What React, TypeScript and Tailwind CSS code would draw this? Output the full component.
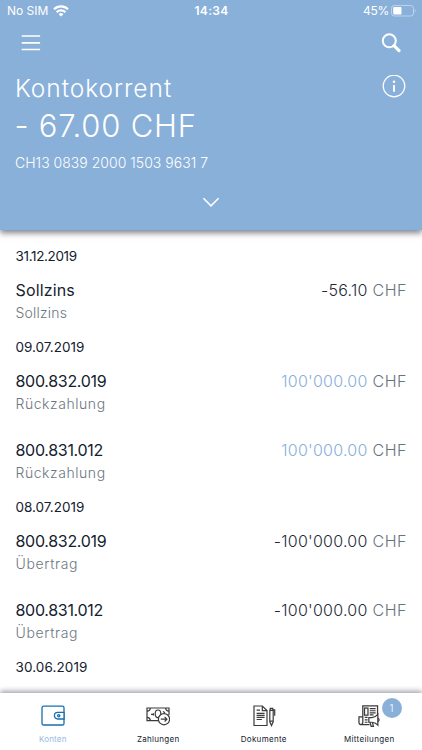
import React from "react";

type Entry = { title: string; note: string; amount: string; credit?: boolean; titleTracking: string; noteTracking: string };
type Day = { date: string; tracking: string; entries: Entry[] };

const days: Day[] = [
  {
    date: "31.12.2019",
    tracking: "tracking-[-0.35px]",
    entries: [
      { title: "Sollzins", note: "Sollzins", amount: "-56.10", titleTracking: "tracking-[0.15px]", noteTracking: "tracking-[0.2px]" },
    ],
  },
  {
    date: "09.07.2019",
    tracking: "tracking-[0px]",
    entries: [
      { title: "800.832.019", note: "Rückzahlung", amount: "100'000.00", credit: true, titleTracking: "tracking-[-0.3px]", noteTracking: "tracking-[0.55px]" },
      { title: "800.831.012", note: "Rückzahlung", amount: "100'000.00", credit: true, titleTracking: "tracking-[-0.3px]", noteTracking: "tracking-[0.55px]" },
    ],
  },
  {
    date: "08.07.2019",
    tracking: "tracking-[0px]",
    entries: [
      { title: "800.832.019", note: "Übertrag", amount: "-100'000.00", titleTracking: "tracking-[-0.3px]", noteTracking: "tracking-[0.65px]" },
      { title: "800.831.012", note: "Übertrag", amount: "-100'000.00", titleTracking: "tracking-[-0.3px]", noteTracking: "tracking-[0.65px]" },
    ],
  },
  { date: "30.06.2019", tracking: "tracking-[0.1px]", entries: [] },
];

function StatusBar() {
  return (
    <div className="grid h-[22px] grid-cols-3 items-center pl-[7px] pr-[6px] text-[12px] leading-[22px]">
      <div className="flex items-center gap-[5px]">
        <span className="tracking-[0px]">No SIM</span>
        <svg width="16" height="12" viewBox="0 0 16 12" fill="none" stroke="currentColor" strokeWidth="2.2">
          <path d="M1 4.3a10 10 0 0 1 14 0" />
          <path d="M3.6 7.2a6.3 6.3 0 0 1 8.8 0" />
          <path d="M8 11.6 5.6 9.2a3.5 3.5 0 0 1 4.8 0z" fill="currentColor" stroke="none" />
        </svg>
      </div>
      <div className="text-center font-semibold tracking-[0.3px]">14:34</div>
      <div className="flex items-center justify-end gap-[2px]">
        <span className="tracking-[-0.25px]">45%</span>
        <svg width="25" height="12" viewBox="0 0 25 12" fill="none">
          <rect x="0.5" y="0.5" width="22" height="10.5" rx="2.8" stroke="white" strokeOpacity=".45" />
          <rect x="2.2" y="2" width="8.3" height="7.5" rx="1" fill="white" />
          <path d="M23.6 4v3.6c1.2-.6 1.2-3 0-3.6z" fill="white" fillOpacity=".5" />
        </svg>
      </div>
    </div>
  );
}

function Header() {
  return (
    <header className="z-10 h-[230px] shrink-0 bg-[#89b0d9] text-white shadow-[0_3px_6px_rgba(20,25,50,0.55)]">
      <StatusBar />
      <div className="flex h-[42px] items-center justify-between pl-[21px] pr-[20px]">
        <svg width="20" height="18" viewBox="0 0 20 18" stroke="white" strokeWidth="1.7">
          <path d="M.7 2h18.4M.7 8.8h18.4M.7 15.5h18.4" />
        </svg>
        <svg width="21" height="21" viewBox="0 0 21 21" fill="none" stroke="white">
          <circle cx="8.3" cy="7.8" r="6.5" strokeWidth="2" />
          <path d="m13 12.6 5 5" strokeWidth="3.2" strokeLinecap="round" />
        </svg>
      </div>
      <div className="flex h-[46px] items-center justify-between pl-[15px] pr-[16px]">
        <h1 className="pt-[2px] text-[24.5px] font-light leading-[36px] tracking-[0.95px]">Kontokorrent</h1>
        <svg width="24" height="24" viewBox="0 0 24 24" fill="none" stroke="white">
          <circle cx="12" cy="11" r="10.8" strokeWidth="1.2" />
          <circle cx="12" cy="6.8" r="1.3" fill="white" stroke="none" />
          <path d="M12 10v6.7" strokeWidth="2" />
        </svg>
      </div>
      <div className="-mt-px pl-[14.5px] text-[31px] font-light leading-[34px] tracking-[0.8px]">- 67.00 CHF</div>
      <div className="mt-[9px] pl-[15px] text-[14px] font-[350] leading-[22px] tracking-[0.02px]">CH13 0839 2000 1503 9631 7</div>
      <div className="flex justify-center pt-[23px]">
        <svg width="18" height="11" viewBox="0 0 18 11" fill="none" stroke="white" strokeWidth="1.5">
          <path d="m1.4 1.2 7.6 7.7 7.6-7.7" />
        </svg>
      </div>
    </header>
  );
}

function Transaction({ entry }: { entry: Entry }) {
  return (
    <div className="h-[69px] pt-[11px]">
      <div className="flex items-center justify-between text-[16px] leading-[24px]">
        <span className={`font-[380] text-[#14212e] ${entry.titleTracking}`}>{entry.title}</span>
        <span className="-mr-[0.5px] font-light text-[#67737d]">
          <span className={`tracking-[0.25px] ${entry.credit ? "text-[#89b0d9]" : "text-[#1f2c38]"}`}>{entry.amount}</span>
          <span className="tracking-[0.5px]"> CHF</span>
        </span>
      </div>
      <div className={`text-[14px] font-light leading-[22px] text-[#6d7780] ${entry.noteTracking}`}>{entry.note}</div>
    </div>
  );
}

const WalletIcon = () => (
  <svg width="24" height="22" viewBox="0 0 24 22" fill="none" stroke="#1a6fae" strokeWidth="1.3">
    <rect x="1" y="1.2" width="22" height="18.8" rx="1.6" />
    <path d="M23 7.4h-6.3a3.3 3.3 0 0 0 0 6.6H23z" fill="white" />
    <circle cx="17.7" cy="10.7" r="1.1" />
  </svg>
);

const MoneyIcon = () => (
  <svg width="24" height="22" viewBox="0 0 24 22" fill="none" stroke="#3c3a3a" strokeWidth="1.2">
    <path d="M12.5 15.6H1V3h22v7" />
    <path d="M1 6.2A3.5 3.5 0 0 0 4.4 3M1 12.4a3.5 3.5 0 0 1 3.4 3.2M19.6 3A3.5 3.5 0 0 0 23 6.2" />
    <ellipse cx="12" cy="8.8" rx="2.8" ry="3.8" />
    <path d="M7.4 8.2v2.2M5 9.3h2M17 6.5l2 1.2" />
    <circle cx="18" cy="14.2" r="5.6" fill="white" />
    <path d="M14.8 14.2h6M18.6 11.9l2.3 2.3-2.3 2.3" />
  </svg>
);

const DocumentIcon = () => (
  <svg width="24" height="22" viewBox="0 0 24 22" fill="none" stroke="#3c3a3a" strokeWidth="1.2">
    <path d="M10.3 1H2v19.5h13V5.6z" />
    <path d="M10.3 1v4.6H15M4.6 5.2H8M4.6 8.3h8M4.6 10.3h8M4.6 12.3h8M4.6 14.5h5.3" />
    <path d="M17.8 5.3h3.4v11.5l-1.7 3.8-1.7-3.8zM18.2 5V3.4h2.6V5M21.2 4.8h1.5v6M17.8 16.2h3.4" />
  </svg>
);

const NewsIcon = () => (
  <svg width="23" height="23" viewBox="0 0 24 24" fill="none" stroke="#3c3a3a" strokeWidth="1.3">
    <path d="M12 20.5H3.2a2.2 2.2 0 0 1-2.2-2.3v-5.7h4V1h15.4v9M5 12.5v5.7c0 2-2.4 2.8-3.2 1.6" />
    <rect x="6.8" y="3.2" width="3.6" height="7.4" />
    <path d="M12.2 3.7h6.2M12.2 6h6.2M12.2 8.3h6.2M12.2 10.4h4M7 13h3M7 15.5h3M7 18h3" />
    <path d="M12.4 17.6l1.3 4.6h2.4l-1.2-4.6" fill="white" />
    <path d="M11.3 13.2h3.2c2.6 0 4.5-1.5 6.2-3.4v11.2c-1.7-1.8-3.6-3-6.2-3h-3.2z" fill="white" />
    <path d="M20.8 13.8a1.8 1.8 0 0 1 0 3.4" />
  </svg>
);

function NavItem({ label, icon, active, badge, tracking }: { label: string; icon: React.ReactNode; active?: boolean; badge?: string; tracking: string }) {
  return (
    <div className="relative flex flex-col items-center pt-[12px]">
      <div className="flex h-[22px] items-start">{icon}</div>
      <span className={`mt-[7px] text-[8px] leading-[10px] ${tracking} ${active ? "text-[#96b9de]" : "text-[#14212e]"}`}>{label}</span>
      {badge && (
        <span className="absolute left-[65px] top-[5px] flex size-[20px] items-center justify-center rounded-full bg-[#89b0d9] text-[10px] font-light text-white">
          {badge}
        </span>
      )}
    </div>
  );
}

export default function App() {
  return (
    <div className="flex h-[750px] w-[422px] flex-col overflow-hidden bg-white font-['Inter','Liberation_Sans',sans-serif]">
      <Header />
      <main className="min-h-0 flex-1 overflow-hidden px-[15.5px] pt-[15px]">
        {days.map((day) => (
          <section key={day.date}>
            <h2 className={`text-[13.5px] font-[380] leading-[22px] text-[#14212e] ${day.tracking}`}>{day.date}</h2>
            {day.entries.map((entry) => (
              <Transaction key={entry.title} entry={entry} />
            ))}
          </section>
        ))}
      </main>
      <nav className="z-10 grid h-[57px] shrink-0 grid-cols-4 bg-white shadow-[0_-2px_5px_rgba(20,25,50,0.4)]">
        <NavItem label="Konten" icon={<WalletIcon />} active tracking="tracking-[0.2px]" />
        <NavItem label="Zahlungen" icon={<MoneyIcon />} tracking="tracking-[0.3px]" />
        <NavItem label="Dokumente" icon={<DocumentIcon />} tracking="tracking-[0.3px]" />
        <NavItem label="Mitteilungen" icon={<NewsIcon />} badge="1" tracking="tracking-[0.35px]" />
      </nav>
    </div>
  );
}
